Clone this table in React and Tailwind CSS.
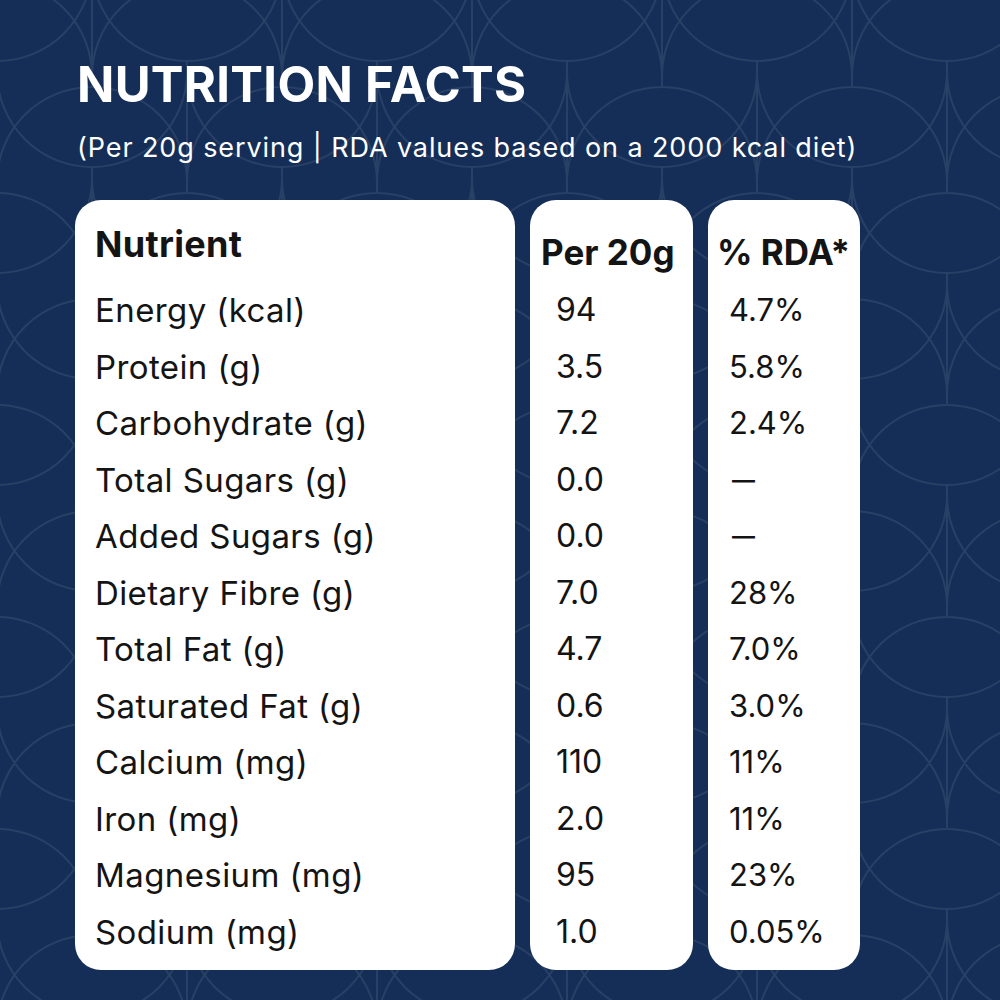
import React from "react";

const rows = [
  ["Energy (kcal)", "94", "4.7%"],
  ["Protein (g)", "3.5", "5.8%"],
  ["Carbohydrate (g)", "7.2", "2.4%"],
  ["Total Sugars (g)", "0.0", "—"],
  ["Added Sugars (g)", "0.0", "—"],
  ["Dietary Fibre (g)", "7.0", "28%"],
  ["Total Fat (g)", "4.7", "7.0%"],
  ["Saturated Fat (g)", "0.6", "3.0%"],
  ["Calcium (mg)", "110", "11%"],
  ["Iron (mg)", "2.0", "11%"],
  ["Magnesium (mg)", "95", "23%"],
  ["Sodium (mg)", "1.0", "0.05%"],
];

// lens + arch background, built from half circles r=95
function lensPath() {
  let d = "";
  const add = (cx, cy) => {
    d += `M${cx - 95},${cy + 55} A95,95 0 0 1 ${cx + 95},${cy + 55} `;
    d += `M${cx - 95},${cy - 55} A95,95 0 0 0 ${cx + 95},${cy - 55} `;
    d += `M${cx},${cy + 40} L${cx},${cy + 172} `;
  };
  for (let i = -1; i < 7; i++) {
    for (let j = -1; j < 6; j++) {
      add(-3 + 190 * i, 21 + 212 * j);
      add(92 + 190 * i, 127 + 212 * j);
    }
  }
  return d;
}

function Pattern() {
  return (
    <svg className="absolute inset-0" width="1000" height="1000" viewBox="0 0 1000 1000">
      <path d={lensPath()} fill="none" stroke="#ffffff" strokeOpacity="0.09" strokeWidth="2" />
    </svg>
  );
}

export default function App() {
  return (
    <div
      className="relative w-[1000px] h-[1000px] overflow-hidden bg-[#142e57] text-white"
      style={{ fontFamily: "Inter, 'Noto Sans', sans-serif" }}
    >
      <Pattern />
      <div className="relative pt-[61px]">
        <h1 className="pl-[77px] text-[49px] leading-[48px] h-[48px] font-bold tracking-[0.3px]">
          NUTRITION FACTS
        </h1>
        <p className="pl-[77px] mt-[26px] text-[27px] leading-[26px] tracking-[0.9px]">
          (Per 20g serving | RDA values based on a 2000 kcal diet)
        </p>

        <div className="flex gap-[15px] pl-[75px] mt-[39px] h-[770px] text-[#141414]">
          <div className="w-[440px] bg-white rounded-[26px] pt-[16px] pl-[20px]">
            <div className="h-[66px] text-[36px] leading-[56px] font-bold tracking-[0.3px]">Nutrient</div>
            {rows.map((r) => (
              <div key={r[0]} className="h-[56.5px] text-[33px] leading-[56.5px] tracking-[0.4px]">
                {r[0]}
              </div>
            ))}
          </div>

          <div className="w-[163px] bg-white rounded-[26px] pt-[24px]">
            <div className="h-[58px] pl-[11px] text-[35px] leading-[56px] font-bold">Per 20g</div>
            {rows.map((r) => (
              <div key={r[0]} className="h-[56.5px] pl-[26px] text-[32px] leading-[56.5px]">
                {r[1]}
              </div>
            ))}
          </div>

          <div className="w-[152px] bg-white rounded-[26px] pt-[24px]">
            <div className="h-[58px] pl-[9px] text-[35px] leading-[56px] font-bold">% RDA*</div>
            {rows.map((r) =>
              r[2] === "—" ? (
                <div key={r[0]} className="h-[56.5px] pl-[24px] text-[23px] leading-[56.5px] font-semibold">
                  {r[2]}
                </div>
              ) : (
                <div key={r[0]} className="h-[56.5px] pl-[21px] text-[31px] leading-[56.5px]">
                  {r[2]}
                </div>
              )
            )}
          </div>
        </div>
      </div>
    </div>
  );
}
